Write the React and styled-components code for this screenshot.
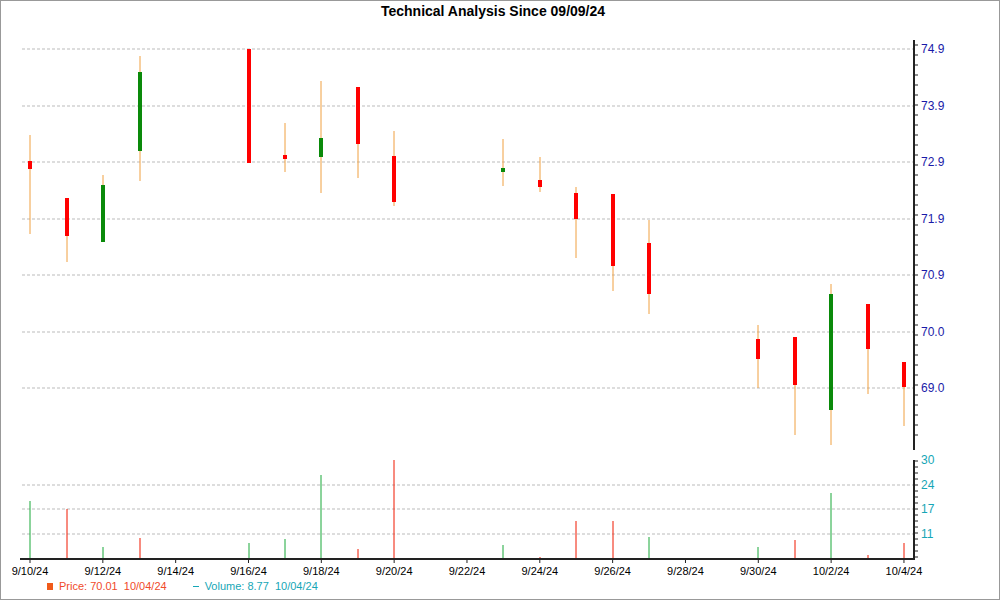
import styled, { createGlobalStyle } from 'styled-components';

const Global = createGlobalStyle`
  body { margin: 0; background: #fff; font-family: "Liberation Sans", Arial, sans-serif; }
`;

const Frame = styled.div`
  width: 1000px;
  height: 600px;
  box-sizing: border-box;
  border: 1px solid #999;
  position: relative;
  background: #fff;
`;

const Title = styled.div`
  position: absolute;
  top: 2px;
  left: 0;
  right: 14px;
  text-align: center;
  font-weight: bold;
  font-size: 14px;
  color: #000;
`;

const Legend = styled.div`
  position: absolute;
  left: 46px;
  top: 579px;
  display: flex;
  gap: 26px;
  font-size: 11px;
`;

const LegendItem = styled.span`
  color: ${(p) => p.color};
  display: flex;
  align-items: center;
  gap: 6px;
`;

const Mark = styled.span`
  display: inline-block;
  width: ${(p) => p.w}px;
  height: ${(p) => p.h}px;
  background: ${(p) => p.color};
`;

const xs = { '9/10': 30, '9/11': 67, '9/12': 103, '9/13': 140, '9/16': 249, '9/17': 285, '9/18': 321, '9/19': 358, '9/20': 394, '9/23': 503, '9/24': 540, '9/25': 576, '9/26': 613, '9/27': 649, '9/30': 758, '10/1': 795, '10/2': 831, '10/3': 868, '10/4': 904 };

// [day, wickTop, wickBottom, bodyTop, bodyBottom, up, volTop, volUp]
const candles = [
  ['9/10', 135, 234, 161, 169, 0, 501, 1],
  ['9/11', 198, 262, 198, 236, 0, 509, 0],
  ['9/12', 175, 242, 185, 242, 1, 547, 1],
  ['9/13', 56, 181, 72, 151, 1, 538, 0],
  ['9/16', 49, 163, 49, 163, 0, 543, 1],
  ['9/17', 123, 172, 155, 159, 0, 539, 1],
  ['9/18', 81, 193, 138, 157, 1, 475, 1],
  ['9/19', 87, 178, 87, 144, 0, 549, 0],
  ['9/20', 131, 206, 156, 202, 0, 460, 0],
  ['9/23', 139, 186, 168, 172, 1, 545, 1],
  ['9/24', 157, 192, 180, 187, 0, 557, 0],
  ['9/25', 187, 258, 193, 219, 0, 521, 0],
  ['9/26', 194, 291, 194, 266, 0, 521, 0],
  ['9/27', 220, 314, 243, 294, 0, 537, 1],
  ['9/30', 325, 388, 339, 359, 0, 547, 1],
  ['10/1', 337, 435, 337, 385, 0, 540, 0],
  ['10/2', 284, 445, 294, 410, 1, 493, 1],
  ['10/3', 304, 394, 304, 349, 0, 555, 0],
  ['10/4', 362, 426, 362, 387, 0, 543, 0],
];

const priceGrid = [[49, '74.9'], [106, '73.9'], [162, '72.9'], [219, '71.9'], [275, '70.9'], [332, '70.0'], [388, '69.0']];
const volGrid = [[460, '30'], [485, '24'], [509, '17'], [534, '11']];
const dates = ['9/10', '9/12', '9/14', '9/16', '9/18', '9/20', '9/22', '9/24', '9/26', '9/28', '9/30', '10/2', '10/4'];
const dx = (d) => 30 + (d / 2) * 72.83;

function Chart() {
  return (
    <svg width="1000" height="600" style={{ position: 'absolute', left: -1, top: -1 }}>
      {priceGrid.map(([y]) => (
        <line key={y} x1="22" x2="914" y1={y} y2={y} stroke="#bbb" strokeDasharray="3,2" />
      ))}
      {volGrid.slice(1).map(([y]) => (
        <line key={y} x1="22" x2="914" y1={y} y2={y} stroke="#bbb" strokeDasharray="3,2" />
      ))}
      <line x1="914" x2="914" y1="40" y2="450" stroke="#222" strokeWidth="2" />
      <line x1="914" x2="914" y1="460" y2="559" stroke="#222" strokeWidth="2" />
      <line x1="20" x2="915" y1="559" y2="559" stroke="#222" strokeWidth="2" />
      {Array.from({ length: 40 }, (_, i) => 45 + i * 10).map((y) => (
        <line key={'p' + y} x1="914" x2="918" y1={y} y2={y} stroke="#222" />
      ))}
      {Array.from({ length: 17 }, (_, i) => 461 + i * 6).map((y) => (
        <line key={'v' + y} x1="914" x2="918" y1={y} y2={y} stroke="#222" />
      ))}
      {priceGrid.map(([y, t]) => (
        <text key={t} x="921" y={y + 4} fontSize="12" fill="#1a1aa8" fontFamily="Liberation Sans">{t}</text>
      ))}
      {volGrid.map(([y, t]) => (
        <text key={t} x="921" y={y + 4} fontSize="12" fill="#16a6b6" fontFamily="Liberation Sans">{t}</text>
      ))}
      {dates.map((d, i) => (
        <g key={d}>
          <line x1={dx(i * 2)} x2={dx(i * 2)} y1="559" y2="563" stroke="#222" />
          <text x={dx(i * 2)} y="575" fontSize="11" textAnchor="middle" fill="#000" fontFamily="Liberation Sans">{d + '/24'}</text>
        </g>
      ))}
      {candles.map(([d, wt, wb, bt, bb, up, vt, vu]) => {
        const x = xs[d];
        return (
          <g key={d}>
            <line x1={x} x2={x} y1={wt} y2={wb} stroke="#f0a040" />
            <rect x={x - 2} y={bt} width="4" height={Math.max(bb - bt, 3)} fill={up ? '#0a8a0a' : '#ff0000'} />
            <line x1={x} x2={x} y1={vt} y2="558" stroke={vu ? '#18a838' : '#f01800'} />
          </g>
        );
      })}
    </svg>
  );
}

export default function App() {
  return (
    <>
      <Global />
      <Frame>
        <Chart />
        <Title>Technical Analysis Since 09/09/24</Title>
        <Legend>
          <LegendItem color="#f04a2a"><Mark w={6} h={7} color="#f05a1a" />Price: 70.01&nbsp; 10/04/24</LegendItem>
          <LegendItem color="#16a6b6"><Mark w={6} h={1} color="#16a6b6" />Volume: 8.77&nbsp; 10/04/24</LegendItem>
        </Legend>
      </Frame>
    </>
  );
}
